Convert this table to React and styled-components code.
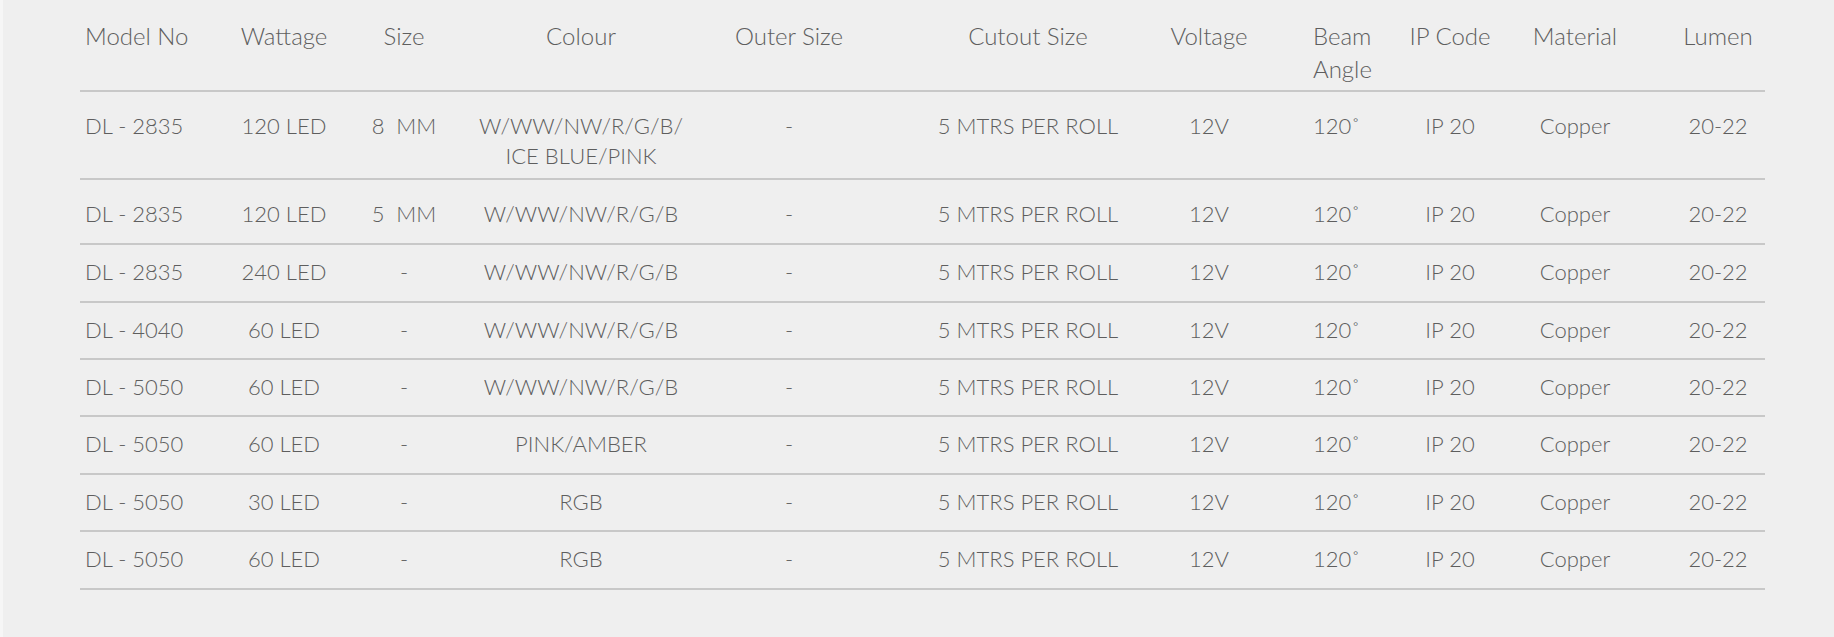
import React from "react";
import styled, { createGlobalStyle } from "styled-components";

const GlobalStyle = createGlobalStyle`
  html, body {
    margin: 0;
    padding: 0;
    background: #f6f6f6;
  }
  body {
    font-family: "Lato", "Open Sans", sans-serif;
  }
`;

const COLS = "170px 68px 172px 182px 234px 244px 118px 153px 58px 192px 94px";

const columns = [
  { label: "Model No", align: "left", indent: 5 },
  { label: "Wattage", align: "center" },
  { label: "Size", align: "center" },
  { label: "Colour", align: "center" },
  { label: "Outer Size", align: "center" },
  { label: "Cutout Size", align: "center" },
  { label: "Voltage", align: "center" },
  { label: "Beam\nAngle", align: "left", indent: 45 },
  { label: "IP Code", align: "center" },
  { label: "Material", align: "center" },
  { label: "Lumen", align: "center" },
];

const tail = ["-", "5 MTRS PER ROLL", "12V", "120˚", "IP 20", "Copper", "20-22"];

const rows = [
  { pad: [19.3, 6.3], lh: 30.5, cells: ["DL - 2835", "120 LED", "8  MM", "W/WW/NW/R/G/B/\nICE BLUE/PINK", ...tail] },
  { pad: [19, 14], cells: ["DL - 2835", "120 LED", "5  MM", "W/WW/NW/R/G/B", ...tail] },
  { pad: [12, 13.4], cells: ["DL - 2835", "240 LED", "-", "W/WW/NW/R/G/B", ...tail] },
  { pad: [12, 13.4], cells: ["DL - 4040", "60 LED", "-", "W/WW/NW/R/G/B", ...tail] },
  { pad: [12, 13.4], cells: ["DL - 5050", "60 LED", "-", "W/WW/NW/R/G/B", ...tail] },
  { pad: [12, 13.4], cells: ["DL - 5050", "60 LED", "-", "PINK/AMBER", ...tail] },
  { pad: [12, 13.4], cells: ["DL - 5050", "30 LED", "-", "RGB", ...tail] },
  { pad: [12, 13.4], cells: ["DL - 5050", "60 LED", "-", "RGB", ...tail] },
];

const Page = styled.div`
  margin-left: 3px;
  min-height: 637px;
  background: #efefef;
  padding: 0 69px 0 77px;
  box-sizing: border-box;
`;

const Table = styled.div`
  display: flex;
  flex-direction: column;
  color: #5e5e5e;
  font-weight: 300;
  font-size: 22px;
`;

const HeaderRow = styled.div`
  display: grid;
  grid-template-columns: ${COLS};
  align-items: start;
  padding: 19px 0 4.6px;
  font-size: 24px;
  line-height: 33px;
  border-bottom: 2px solid #c8c8c8;
`;

const Row = styled.div`
  display: grid;
  grid-template-columns: ${COLS};
  align-items: start;
  padding: ${(p) => p.$top}px 0 ${(p) => p.$bottom}px;
  line-height: ${(p) => p.$lh}px;
  border-bottom: 2px solid #c8c8c8;
`;

const Cell = styled.div`
  display: flex;
  min-width: 0;
  justify-content: ${(p) => (p.$align === "left" ? "flex-start" : "center")};
  text-align: ${(p) => p.$align};
  padding-left: ${(p) => p.$indent || 0}px;
  white-space: pre;
`;

export default function App() {
  return (
    <>
      <GlobalStyle />
      <Page>
        <Table>
          <HeaderRow>
            {columns.map((c, i) => (
              <Cell key={i} $align={c.align} $indent={c.indent}>
                {c.label}
              </Cell>
            ))}
          </HeaderRow>
          {rows.map((r, ri) => (
            <Row key={ri} $top={r.pad[0]} $bottom={r.pad[1]} $lh={r.lh || 30}>
              {r.cells.map((v, ci) => (
                <Cell key={ci} $align={columns[ci].align} $indent={columns[ci].indent}>
                  {v}
                </Cell>
              ))}
            </Row>
          ))}
        </Table>
      </Page>
    </>
  );
}
